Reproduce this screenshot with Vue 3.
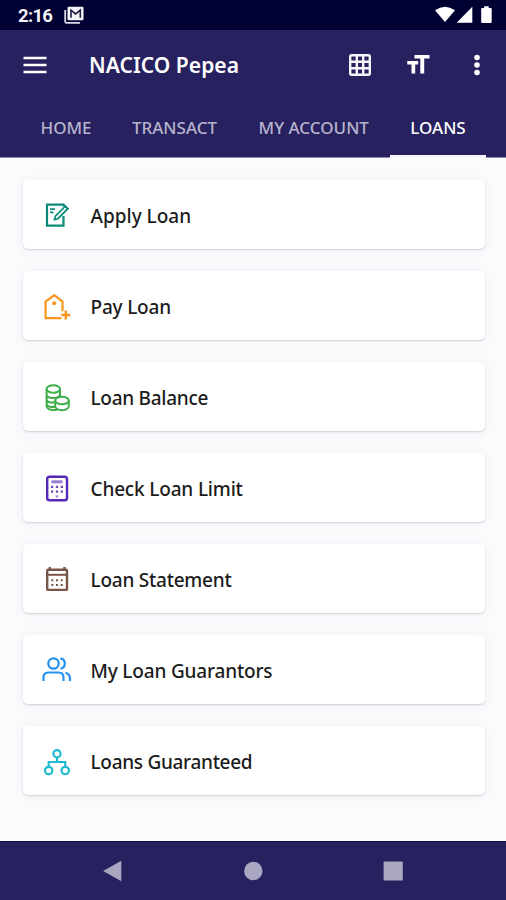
<script setup>
const tabs = [
  { label: 'HOME', name: 'home' },
  { label: 'TRANSACT', name: 'transact' },
  { label: 'MY ACCOUNT', name: 'account' },
  { label: 'LOANS', name: 'loans' },
]
const items = [
  { label: 'Apply Loan', icon: 'apply', tracking: 0 },
  { label: 'Pay Loan', icon: 'pay', tracking: -0.2 },
  { label: 'Loan Balance', icon: 'balance', tracking: -0.28 },
  { label: 'Check Loan Limit', icon: 'limit', tracking: -0.17 },
  { label: 'Loan Statement', icon: 'statement', tracking: -0.24 },
  { label: 'My Loan Guarantors', icon: 'guarantors', tracking: -0.18 },
  { label: 'Loans Guaranteed', icon: 'guaranteed', tracking: -0.3 },
]
</script>

<template>
  <div class="screen">
    <div class="status">
      <span class="clock">2:16</span>
      <svg class="mail" width="20" height="18" viewBox="0 0 20 18">
        <path d="M1.200 4v11.500q0 1.300 1.300 1.300H16" fill="none" stroke="#dcdce6" stroke-width="1.800" />
        <rect x="3.500" y=".7" width="16" height="13.600" rx="1.200" fill="#f4f4f8" />
        <path d="M7 11.800V4.200l4.600 3.700 4.700-3.700v7.600" fill="none" stroke="#1b1b42" stroke-width="1.600" />
      </svg>
      <svg class="signals" width="58" height="18" viewBox="0 0 58 18" fill="#fff">
        <path d="M0 4.300Q10 -2.800 20 4.300L10 16Z" />
        <path d="M37.300 .8V16.800H21.700Z" />
        <path d="M47.200 2h2V.3h4.500V2h2q1 0 1 1v13q0 1-1 1h-8.500q-1 0-1-1V3q0-1 1-1Z" />
      </svg>
    </div>

    <header class="header">
      <div class="toolbar">
        <svg class="menu" width="24" height="18" viewBox="0 0 24 18">
          <path d="M.5 2H23.500M.5 9H23.500M.5 16H23.500" stroke="#fff" stroke-width="2.600" />
        </svg>
        <h1 class="title">NACICO Pepea</h1>
        <svg class="grid" width="22" height="22" viewBox="0 0 22 22">
          <rect x="1.200" y="1.200" width="19.600" height="19.600" rx="1.500" fill="none" stroke="#f6f5fb" stroke-width="2.400" />
          <path d="M7.800 1V21M14.200 1V21M1 7.800H21M1 14.200H21" stroke="#f6f5fb" stroke-width="2.400" />
        </svg>
        <svg class="size" width="23" height="19" viewBox="0 0 23 19" fill="#fff">
          <path d="M7.500 0H22.500V3.600H17.200V18.500H13.300V3.600H7.500ZM.3 6H11.200V9.500H8.200V18.500H4.500V9.500H.3Z" />
        </svg>
        <svg class="more" width="8" height="22" viewBox="0 0 8 22" fill="#fff">
          <circle cx="4" cy="3.500" r="2.800" /><circle cx="4" cy="11" r="2.800" /><circle cx="4" cy="18.500" r="2.800" />
        </svg>
      </div>
      <nav class="tabs">
        <span v-for="tab in tabs" :key="tab.name" class="tab" :class="[tab.name, { active: tab.name === 'loans' }]">{{ tab.label }}</span>
      </nav>
    </header>

    <main class="list">
      <div v-for="item in items" :key="item.icon" class="card">
        <svg class="icon" :class="item.icon" width="36" height="36" viewBox="0 0 36 36" fill="none" stroke="currentColor" stroke-width="2.200">
          <template v-if="item.icon === 'apply'">
            <path d="M24.500 10.500V8.600H8V29.700H24.500V20" />
            <path d="M11 13.200H16M11 16.300H14.500" stroke-width="1.700" />
            <path d="M26.300 10.200L28.800 12.700L19 22.700L15.500 23.600L16.400 20.100Z" stroke-width="1.700" />
            <path d="M25 9L29.500 13.500" stroke-width="1.700" />
          </template>
          <template v-else-if="item.icon === 'pay'">
            <path d="M22.500 31.200H6.600V14.600L15.300 8.100L23.500 14.600V24.200" />
            <circle cx="15.200" cy="16.200" r="2" fill="currentColor" stroke="none" />
            <path d="M26.800 23.500V32.500M22.300 28H31.300" stroke-width="2.500" />
          </template>
          <template v-else-if="item.icon === 'balance'">
            <g stroke-width="2">
              <ellipse cx="14.300" cy="11" rx="6.700" ry="3.700" />
              <path d="M7.600 11V28C7.600 30.300 10.500 32 14.500 32H18M21 11V18M7.600 16.500C7.600 21 19.500 21.500 21 16.500M7.600 21.500C8 24 12 25.500 15.500 24M7.600 26C8.500 28.500 12 30 16 28.500" />
              <ellipse cx="23" cy="22.500" rx="6.800" ry="3.800" />
              <path d="M16.200 22.500V28C16.200 33.500 29.800 33.500 29.800 28V22.500" />
            </g>
          </template>
          <template v-else-if="item.icon === 'limit'">
            <rect x="8.200" y="7.700" width="19.800" height="23.600" rx="2.300" stroke-width="2.400" />
            <path d="M12.500 12.800H23.500" stroke-width="3" opacity=".6" />
            <path d="M12 17.900h2.200m2.700 0h2.200m2.700 0h2.200M12 22.700h2.200m2.700 0h2.200m2.700 0h2.200" stroke-width="2.200" opacity=".85" />
            <path d="M16.700 27.400h2.600" stroke-width="2.400" opacity=".5" />
          </template>
          <template v-else-if="item.icon === 'statement'">
            <rect x="8.200" y="9.700" width="19.800" height="20.200" rx="1" stroke-width="2.400" />
            <path d="M8 14.800H28" stroke-width="2" />
            <path d="M10.800 7V11M25.400 7V11" stroke-width="2.400" />
            <path d="M12.300 20.200h2m2.700 0h2m2.700 0h2M12.300 25h2m2.700 0h2m2.700 0h2" stroke-width="2" />
          </template>
          <template v-else-if="item.icon === 'guarantors'">
            <circle cx="14.500" cy="11.500" r="5.200" />
            <path d="M4.500 29V25.500Q4.500 20.500 9.500 20.500H19.500Q24.500 20.500 24.500 25.500V29M21.500 6.300A5.300 5.300 0 0 1 21.500 16.700M26.500 20.800Q31 22 31 26.500V29" />
          </template>
          <template v-else>
            <circle cx="18" cy="10.800" r="3.600" />
            <circle cx="9.700" cy="27.500" r="3.700" />
            <circle cx="26.200" cy="27.500" r="3.700" />
            <path d="M18 14.500V19M9.700 23.800V19H26.200V23.800" />
          </template>
        </svg>
        <span class="label" :style="{ letterSpacing: item.tracking + 'px' }">{{ item.label }}</span>
      </div>
    </main>

    <footer class="navbar">
      <svg width="20" height="22" viewBox="0 0 20 22"><path d="M.2 11L18.300 .8V21.200Z" /></svg>
      <svg width="20" height="22" viewBox="0 0 20 22"><circle cx="10.300" cy="11" r="9.200" /></svg>
      <svg width="20" height="22" viewBox="0 0 20 22"><rect x=".6" y="1.400" width="19.200" height="19.200" rx="1.200" /></svg>
    </footer>
  </div>
</template>

<style>
body {
  margin: 0;
}
</style>

<style scoped>
.screen {
  width: 506px;
  height: 900px;
  display: flex;
  flex-direction: column;
  overflow: hidden;
  background: #fcfcfe;
  font-family: "Noto Sans", "Open Sans", sans-serif;
}
svg {
  display: block;
  flex: none;
}
.status {
  height: 30px;
  flex: none;
  display: flex;
  align-items: center;
  box-sizing: border-box;
  padding: 0 16px 0 18px;
  background: #000032;
}
.clock {
  width: 46px;
  color: #f4f4f8;
  font: 700 18.5px/30px Roboto, sans-serif;
  letter-spacing: -0.7px;
  padding-top: 2px;
}
.signals {
  margin-left: auto;
  margin-right: -3px;
}
.header {
  height: 127px;
  flex: none;
  background: #28215f;
  border-bottom: 1px solid #8e8aae;
}
.toolbar {
  height: 70px;
  display: flex;
  align-items: center;
  padding-left: 23px;
}
.title {
  width: 260px;
  margin: 0 0 0 42px;
  color: #fff;
  font-size: 21px;
  font-weight: 600;
  line-height: 30px;
  letter-spacing: 0.05px;
  white-space: nowrap;
}
.menu {
  margin-top: -1px;
}
.grid {
  margin-top: -1px;
}
.size {
  margin: -2px 0 0 36px;
}
.more {
  margin: -1px 0 0 43px;
}
.tabs {
  height: 58px;
  display: flex;
}
.tab {
  box-sizing: border-box;
  text-align: center;
  color: #b7b4cc;
  font-size: 17px;
  font-weight: 500;
  line-height: 56px;
  white-space: nowrap;
}
.home {
  width: 91px;
  margin-left: 20.5px;
}
.transact {
  width: 126px;
}
.account {
  width: 152.5px;
}
.loans {
  width: 96px;
}
.active {
  color: #fff;
  border-bottom: 3px solid #f8f3fb;
}
.list {
  flex: 1;
  display: flex;
  flex-direction: column;
  gap: 22.1px;
  padding: 21.6px 21px 0 23px;
}
.card {
  height: 69px;
  flex: none;
  display: flex;
  align-items: center;
  box-sizing: border-box;
  padding-left: 16px;
  border-radius: 5px;
  background: #fff;
  box-shadow: 0 1px 2px rgba(0, 0, 0, 0.16), 0 1px 14px 7px rgba(60, 60, 120, 0.025);
}
.label {
  margin: 3px 0 0 15.5px;
  color: #1c1c1c;
  font-size: 19px;
  font-weight: 500;
  line-height: 28px;
  white-space: nowrap;
}
.apply { color: #0b8a78; }
.pay { color: #f9941d; }
.balance { color: #3fae49; }
.limit { color: #5527b5; }
.statement { color: #795548; }
.guarantors { color: #2391ee; }
.guaranteed { color: #1fb9d2; }
.navbar {
  height: 59px;
  flex: none;
  box-sizing: border-box;
  display: flex;
  justify-content: space-between;
  align-items: center;
  padding: 0 103px;
  background: #28215f;
  border-top: 1px solid #120c4d;
  fill: #aaa7c2;
}
</style>
